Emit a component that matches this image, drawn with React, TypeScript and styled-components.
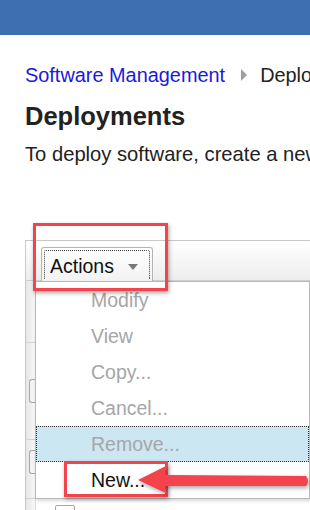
import styled, { createGlobalStyle } from 'styled-components';

const GlobalStyle = createGlobalStyle`
  html, body {
    margin: 0;
    padding: 0;
    background: #ffffff;
    overflow: hidden;
  }
  body {
    font-family: "Liberation Sans", Arial, sans-serif;
    color: #222222;
  }
`;

const Page = styled.div`
  position: relative;
  width: 310px;
  height: 510px;
  overflow: hidden;
`;

const TopBar = styled.div`
  height: 35px;
  background: #3e70b1;
`;

const Content = styled.div`
  padding: 29px 0 0 25px;
`;

const Breadcrumb = styled.div`
  display: flex;
  align-items: center;
  gap: 13px;
  font-size: 19.9px;
  white-space: nowrap;
  height: 22px;
`;

const Crumb = styled.span<{ $link?: boolean }>`
  color: ${(p) => (p.$link ? '#1a1adb' : '#222222')};
`;

const Chevron = styled.span`
  width: 0;
  height: 0;
  margin-left: 3px;
  border-top: 6px solid transparent;
  border-bottom: 6px solid transparent;
  border-left: 6px solid #a0a0a0;
`;

const Title = styled.h1`
  margin: 16px 0 0;
  font-size: 25.5px;
  font-weight: bold;
  color: #222222;
  white-space: nowrap;
  line-height: 29px;
`;

const Intro = styled.p`
  margin: 12px 0 0;
  font-size: 20.2px;
  white-space: nowrap;
  line-height: 23px;
`;

const Table = styled.div`
  margin-top: 74px;
  width: 320px;
  border-top: 1px solid #c8c8c8;
  border-left: 1px solid #c8c8c8;
`;

const Toolbar = styled.div`
  height: 40px;
  padding: 6px 0 0 15px;
  box-sizing: border-box;
  background: linear-gradient(#ffffff, #ededed);
  border-bottom: 1px solid #d0d0d0;
`;

const ActionsButton = styled.div`
  width: 112px;
  height: 34px;
  box-sizing: border-box;
  border: 1px solid #b4b4b4;
  border-bottom: none;
  border-radius: 3px 3px 0 0;
  background: linear-gradient(#ffffff, #f2f2f2);
  padding: 2px;
`;

const FocusRing = styled.div`
  height: 100%;
  box-sizing: border-box;
  border: 1px dotted #444444;
  border-bottom: none;
  border-radius: 2px 2px 0 0;
  display: flex;
  align-items: center;
  padding: 2px 0 0 5px;
  gap: 14px;
  font-size: 19.5px;
  color: #111111;
`;

const Caret = styled.span`
  width: 0;
  height: 0;
  border-left: 5px solid transparent;
  border-right: 5px solid transparent;
  border-top: 6px solid #777777;
  margin-top: 1px;
`;

const Row = styled.div<{ $h: number }>`
  display: flex;
  height: ${(p) => p.$h}px;
  border-bottom: 1px solid #d4d4d4;
`;

const Gutter = styled.div<{ $align?: string }>`
  width: 10px;
  background: linear-gradient(90deg, #e6e6e6, #f8f8f8);
  border-right: 1px solid #dddddd;
  display: flex;
  flex-direction: column;
  justify-content: ${(p) => p.$align ?? 'center'};
  align-items: flex-end;
  padding-top: ${(p) => (p.$align === 'flex-start' ? 10 : 0)}px;
  box-sizing: border-box;
`;

const Handle = styled.div`
  width: 5px;
  height: 22px;
  border: 1px solid #a8a8a8;
  border-right: none;
  border-radius: 3px 0 0 3px;
  background: #f4f4f4;
`;

const Cell = styled.div`
  flex: 1;
  padding: 6px 0 0 19px;
`;

const Checkbox = styled.div`
  width: 18px;
  height: 18px;
  border: 1px solid #9aa8b8;
  border-radius: 2px;
  background: linear-gradient(#ffffff, #eef2f6);
`;

const Menu = styled.ul`
  position: absolute;
  left: 35px;
  top: 281px;
  width: 273px;
  margin: 0;
  padding: 0;
  list-style: none;
  background: #ffffff;
  border: 1px solid #b8b8b8;
  box-shadow: 1px 2px 3px rgba(0, 0, 0, 0.15);
`;

const MenuItem = styled.li<{ $enabled?: boolean; $active?: boolean }>`
  height: 36px;
  box-sizing: border-box;
  display: flex;
  align-items: center;
  padding-left: 54px;
  font-size: 19.5px;
  color: ${(p) => (p.$enabled ? '#111111' : '#a6a6a6')};
  background: ${(p) => (p.$active ? '#cce7f2' : 'transparent')};
  border: 1px dotted ${(p) => (p.$active ? '#333333' : 'transparent')};
`;

const Callout = styled.div<{ $x: number; $y: number; $w: number; $h: number }>`
  position: absolute;
  left: ${(p) => p.$x}px;
  top: ${(p) => p.$y}px;
  width: ${(p) => p.$w}px;
  height: ${(p) => p.$h}px;
  box-sizing: border-box;
  border: 3px solid #f4434a;
  box-shadow: 1px 2px 4px rgba(0, 0, 0, 0.35);
  pointer-events: none;
`;

const Arrow = styled.svg`
  position: absolute;
  left: 130px;
  top: 455px;
  overflow: visible;
  filter: drop-shadow(1px 2px 2px rgba(0, 0, 0, 0.35));
`;

const items = ['Modify', 'View', 'Copy...', 'Cancel...', 'Remove...'];

export default function App() {
  return (
    <Page>
      <GlobalStyle />
      <TopBar />
      <Content>
        <Breadcrumb>
          <Crumb $link>Software Management</Crumb>
          <Chevron />
          <Crumb>Deployments</Crumb>
        </Breadcrumb>
        <Title>Deployments</Title>
        <Intro>To deploy software, create a new deployment.</Intro>
        <Table>
          <Toolbar>
            <ActionsButton>
              <FocusRing>
                Actions
                <Caret />
              </FocusRing>
            </ActionsButton>
          </Toolbar>
          <Row $h={61}>
            <Gutter />
            <Cell />
          </Row>
          <Row $h={96}>
            <Gutter>
              <Handle />
            </Gutter>
            <Cell />
          </Row>
          <Row $h={58}>
            <Gutter $align="flex-start">
              <Handle />
            </Gutter>
            <Cell />
          </Row>
          <Row $h={40}>
            <Gutter />
            <Cell>
              <Checkbox />
            </Cell>
          </Row>
        </Table>
      </Content>

      <Menu>
        {items.map((label) => (
          <MenuItem key={label} $active={label === 'Remove...'}>
            {label}
          </MenuItem>
        ))}
        <MenuItem $enabled>New...</MenuItem>
      </Menu>

      <Callout $x={33} $y={223} $w={135} $h={68} />
      <Callout $x={64} $y={461} $w={104} $h={36} />

      <Arrow width="180" height="45" viewBox="0 0 180 45">
        <path
          d="M8 25 L38 10 Q34 18 36 20 L176 21 Q180 26 176 31 L36 31 Q34 34 38 39 Z"
          fill="#f4434a"
        />
      </Arrow>
    </Page>
  );
}
